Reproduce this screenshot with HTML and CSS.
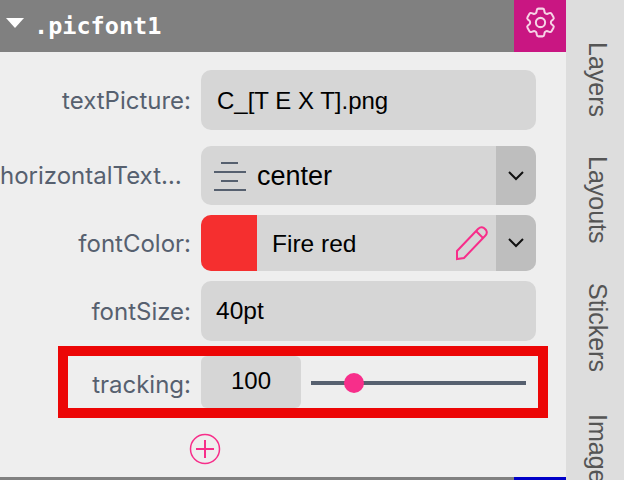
FILE: index.html
```html
<!DOCTYPE html>
<html lang="en">
<head>
    <meta charset="UTF-8">
    <title>.picfont1</title>
    <link rel="stylesheet" href="styles.css">
</head>
<body>
    <div class="app">
        <div class="panel">
            <div class="head">
                <svg class="caret" width="18" height="11" viewBox="0 0 18 11"><path d="M0 0H18L9 10Z" fill="#fff"/></svg>
                <span class="head-title">.picfont1</span>
                <div class="gear-box">
                    <svg width="37" height="37" viewBox="0 0 24 24" fill="none" stroke="#f6d3e6" stroke-width="1.3" stroke-linejoin="round">
                        <path d="M9.594 3.94c.09-.542.56-.94 1.11-.94h2.593c.55 0 1.02.398 1.11.94l.213 1.281c.063.374.313.686.645.87.074.04.147.083.22.127.325.196.72.257 1.075.124l1.217-.456a1.125 1.125 0 011.37.49l1.296 2.247a1.125 1.125 0 01-.26 1.431l-1.003.827c-.293.241-.438.613-.43.992a7.723 7.723 0 010 .255c-.008.378.137.75.43.991l1.004.827c.424.35.534.955.26 1.43l-1.298 2.247a1.125 1.125 0 01-1.369.491l-1.217-.456c-.355-.133-.75-.072-1.076.124a6.57 6.57 0 01-.22.128c-.331.183-.581.495-.644.869l-.213 1.28c-.09.543-.56.941-1.11.941h-2.594c-.55 0-1.02-.398-1.11-.94l-.213-1.281c-.062-.374-.312-.686-.644-.87a6.52 6.52 0 01-.22-.127c-.325-.196-.72-.257-1.076-.124l-1.217.456a1.125 1.125 0 01-1.369-.49l-1.297-2.247a1.125 1.125 0 01.26-1.431l1.004-.827c.292-.24.437-.613.43-.992a6.932 6.932 0 010-.255c.007-.378-.138-.75-.43-.992l-1.004-.827a1.125 1.125 0 01-.26-1.43l1.297-2.247a1.125 1.125 0 011.37-.491l1.216.456c.356.133.751.072 1.076-.124.072-.044.146-.087.22-.128.332-.183.582-.495.644-.869l.214-1.281z"/>
                        <circle cx="12" cy="12" r="3"/>
                    </svg>
                </div>
            </div>

            <div class="rows">
                <div class="row row-text">
                    <label class="lbl">textPicture:</label>
                    <div class="field field-name">C_[T E X T].png</div>
                </div>
                <div class="row row-align">
                    <label class="lbl">horizontalText…</label>
                    <div class="field field-select">
                        <svg class="align-icon" width="34" height="32" viewBox="0 0 34 32" stroke="#56606f" stroke-width="2">
                            <path d="M8 3H25M1 12H33M8 21H25M1 30H33"/>
                        </svg>
                        <span class="select-val">center</span>
                        <div class="chev-box">
                            <svg width="16" height="10" viewBox="0 0 16 10" fill="none" stroke="#111" stroke-width="2"><path d="M1 1L8 8L15 1"/></svg>
                        </div>
                    </div>
                </div>
                <div class="row row-color">
                    <label class="lbl">fontColor:</label>
                    <div class="field field-color">
                        <div class="swatch"></div>
                        <span class="color-name">Fire red</span>
                        <svg class="pencil" width="34" height="36" viewBox="0 0 34 36" fill="none" stroke="#f72e8a" stroke-width="2">
                            <path d="M2 26L23 4Q26 1 29 3L31 5Q33 8 30 11L9 33L2 34Z"/>
                            <path d="M21 6L28 13"/>
                        </svg>
                        <div class="chev-box">
                            <svg width="16" height="10" viewBox="0 0 16 10" fill="none" stroke="#111" stroke-width="2"><path d="M1 1L8 8L15 1"/></svg>
                        </div>
                    </div>
                </div>
                <div class="row row-size">
                    <label class="lbl">fontSize:</label>
                    <div class="field">40pt</div>
                </div>
                <div class="row row-track">
                    <label class="lbl">tracking:</label>
                    <div class="field field-num">100</div>
                    <div class="slider">
                        <div class="thumb"></div>
                    </div>
                </div>
            </div>

            <div class="add">
                <svg width="32" height="32" viewBox="0 0 32 32" fill="none" stroke="#f72e8a">
                    <circle cx="16" cy="16" r="14.500" stroke-width="1.500"/>
                    <path d="M16 7V25M7 16H25" stroke-width="2"/>
                </svg>
            </div>

            <div class="foot"><div class="foot-blue"></div></div>
        </div>

        <div class="side">
            <span class="tab">Layers</span>
            <span class="tab">Layouts</span>
            <span class="tab">Stickers</span>
            <span class="tab tab-last">Images</span>
        </div>
    </div>
</body>
</html>
```

FILE: styles.css
```css
*{
    margin: 0;
    padding: 0;
    box-sizing: border-box;
}
html,body{
    height: 480px;
    overflow: hidden;
}
body{
    font-family: Inter, "Liberation Sans", sans-serif;
    background: #eee;
}
.app{
    display: flex;
    width: 624px;
    height: 480px;
}
.panel{
    width: 566px;
    height: 480px;
    display: flex;
    flex-direction: column;
    background: #eee;
}
.head{
    height: 52px;
    display: flex;
    align-items: center;
    background: #808080;
    padding-left: 6px;
}
.caret{
    margin-top: -6px;
}
.head-title{
    margin-left: 10px;
    flex: 1;
    font-family: "DejaVu Sans Mono", monospace;
    font-weight: bold;
    font-size: 23.500px;
    color: #fff;
}
.gear-box{
    width: 52px;
    height: 52px;
    display: flex;
    justify-content: center;
    padding-top: 4px;
    background: #c91682;
}
.rows{
    display: flex;
    flex-direction: column;
    padding-top: 18px;
}
.row{
    display: flex;
    align-items: center;
}
.row-align{
    margin-top: 16px;
}
.row-color{
    margin-top: 10px;
}
.row-size{
    margin-top: 10px;
}
.lbl{
    width: 191px;
    flex: none;
    text-align: right;
    font-size: 24px;
    color: #56606f;
    white-space: nowrap;
}
.row-align .lbl{
    width: 178px;
    margin-right: 13px;
    text-align: left;
}
.field{
    width: 335px;
    height: 60px;
    margin-left: 10px;
    display: flex;
    align-items: center;
    padding-left: 15px;
    border-radius: 10px;
    background: #d6d6d6;
    font-family: "Liberation Sans", sans-serif;
    font-size: 24.500px;
    color: #000;
}
.field-name{
    padding-left: 16px;
    padding-top: 2px;
    font-size: 24px;
}
.field-select{
    height: 59px;
    padding-left: 12px;
    overflow: hidden;
}
.align-icon{
    flex: none;
}
.select-val{
    margin-left: 10px;
    margin-top: 2px;
    flex: 1;
    font-size: 27px;
}
.chev-box{
    width: 40px;
    height: 100%;
    display: flex;
    align-items: center;
    justify-content: center;
    background: #bebebe;
}
.field-color{
    height: 56px;
    padding-left: 0;
    overflow: hidden;
}
.swatch{
    width: 56px;
    height: 100%;
    background: #f52f2f;
}
.color-name{
    flex: 1;
    margin-left: 15px;
    margin-top: 2px;
}
.pencil{
    margin-right: 7px;
}
.row-track{
    width: 490px;
    height: 72px;
    margin-top: 5px;
    margin-left: 58px;
    border: 10px solid #ec0606;
}
.row-track .lbl{
    width: 123px;
    padding-top: 4px;
}
.field-num{
    width: 100px;
    height: 52px;
    justify-content: center;
    padding-left: 0;
    padding-bottom: 2px;
    border-radius: 6px;
    font-size: 24px;
}
.slider{
    position: relative;
    width: 215px;
    height: 4px;
    margin-left: 10px;
    margin-top: 2px;
    background: #56606f;
}
.thumb{
    position: absolute;
    left: 33px;
    top: -8px;
    width: 20px;
    height: 20px;
    border-radius: 50%;
    background: #f72e8a;
}
.add{
    height: 59px;
    padding-top: 15px;
    padding-left: 189px;
    line-height: 0;
}
.foot{
    height: 3px;
    display: flex;
    justify-content: flex-end;
    background: #808080;
}
.foot-blue{
    width: 52px;
    background: #0000c8;
}
.side{
    width: 58px;
    height: 480px;
    overflow: hidden;
    display: flex;
    flex-direction: column;
    align-items: center;
    gap: 39px;
    padding-top: 42px;
    padding-left: 5px;
    background: #ddd;
}
.tab{
    writing-mode: vertical-rl;
    flex: none;
    font-family: "Liberation Sans", sans-serif;
    font-size: 25px;
    color: #555;
}
.tab-last{
    margin-top: 3px;
}
```
